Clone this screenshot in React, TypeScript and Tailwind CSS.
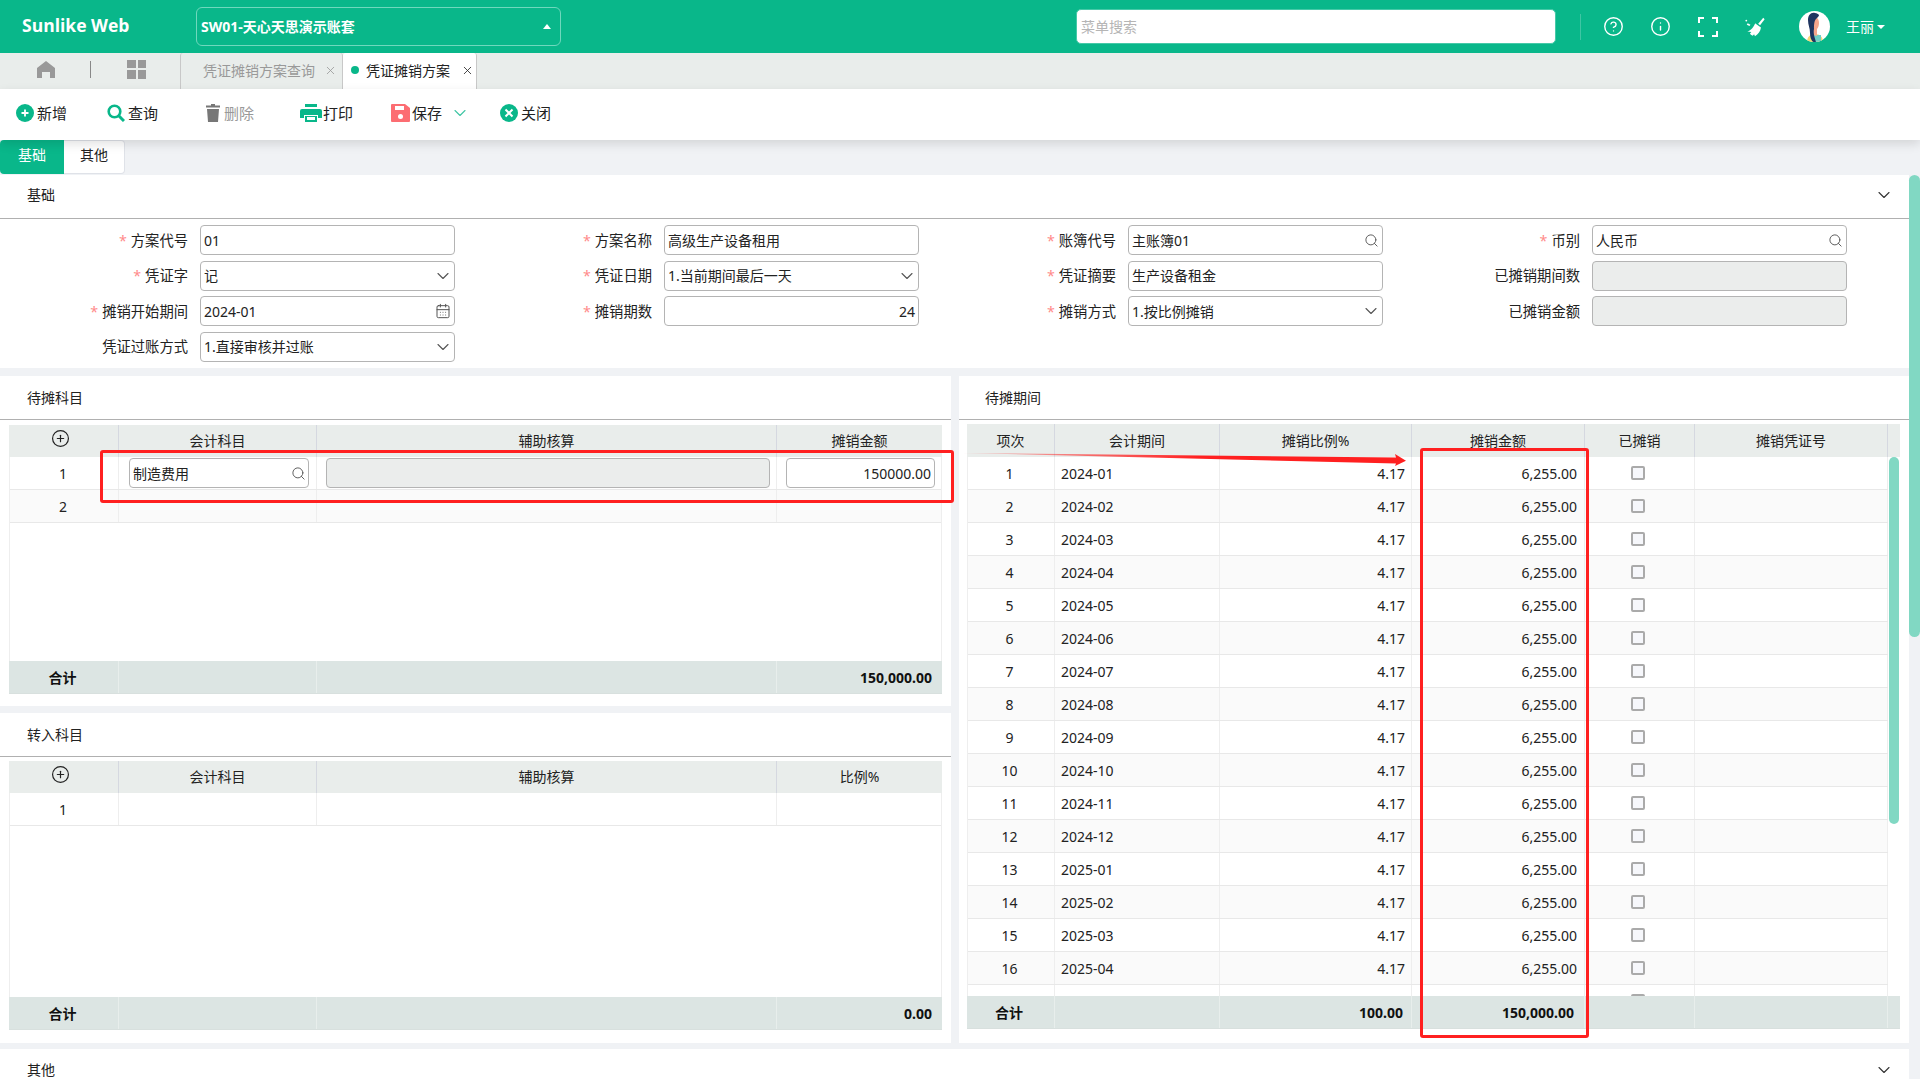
import React from 'react';
import { ChevronDown, Search, CalendarDays, CirclePlus, CircleHelp, Info, X } from 'lucide-react';

const font = 'font-["Noto_Sans","Noto_Sans_CJK_SC",sans-serif]';
const leftCols = 'grid grid-cols-[110px_198px_460px_165px]';
const leftRowCols = 'grid grid-cols-[109px_198px_460px_164px]';
const rightCols = 'grid grid-cols-[88px_165px_192px_173px_110px_193px_12px]';

const periods = [
  '2024-01', '2024-02', '2024-03', '2024-04', '2024-05', '2024-06', '2024-07', '2024-08', '2024-09',
  '2024-10', '2024-11', '2024-12', '2025-01', '2025-02', '2025-03', '2025-04', '',
];

function ToolItem({ icon, label, gap, className, muted }: { icon: React.ReactNode; label: string; gap: string; className?: string; muted?: boolean }) {
  return (
    <div className={`flex items-center ${gap} ${className ?? ''} ${muted ? 'text-[#999]' : 'text-[#222]'}`}>
      {icon}
      <span className="text-[15px] leading-none">{label}</span>
    </div>
  );
}

function Field({ label, required, value, right, disabled, align }: { label?: string; required?: boolean; value?: string; right?: React.ReactNode; disabled?: boolean; align?: string }) {
  return (
    <div className="flex items-center">
      <div className="w-[188px] mr-[12px] pt-[2px] text-right text-[14.300px] leading-none text-[#222] whitespace-nowrap">
        {required && <span className="text-[#ff8a8a] mr-[4px]">*</span>}
        {label}
      </div>
      {label !== undefined && (
        <div className={`w-[255px] h-[30px] rounded-[4px] border border-[#b4b4b4] flex items-center pl-[3px] pr-[3px] text-[14px] text-[#222] ${disabled ? 'bg-[#ebedec]' : 'bg-white'}`}>
          <span className={`flex-1 whitespace-nowrap ${align ?? ''}`}>{value}</span>
          {right}
        </div>
      )}
    </div>
  );
}

const chevron = <ChevronDown className="w-[20px] h-[20px] -mr-[2px] text-[#555]" strokeWidth={1.3} />;
const search = <Search className="w-[15px] h-[15px] text-[#555]" strokeWidth={1.5} />;

function SectionTitle({ title, collapse, className }: { title: string; collapse?: boolean; className?: string }) {
  return (
    <div className={`h-[44px] shrink-0 flex items-center justify-between pr-[15px] border-b border-[#b0b0b0] bg-white text-[14px] text-[#222] ${collapse ? 'pb-[4px]' : ''} ${className ?? 'pl-[27px]'}`}>
      <span>{title}</span>
      {collapse && <ChevronDown className="w-[20px] h-[20px] text-[#333]" strokeWidth={1.3} />}
    </div>
  );
}

function Head({ children, className }: { children?: React.ReactNode; className?: string }) {
  return (
    <div className={`flex items-center justify-center border-r border-[#d5d8e0] text-[14px] text-[#222] last:border-r-0 ${className ?? ''}`}>
      {children}
    </div>
  );
}

function FootCell({ children, className }: { children?: React.ReactNode; className?: string }) {
  return (
    <div className={`flex items-center border-r border-[#e8eeec] text-[14px] font-bold text-[#111] last:border-r-0 ${className ?? ''}`}>
      {children}
    </div>
  );
}

function LeftFooter({ value }: { value: string }) {
  return (
    <div className={`${leftCols} h-[33px] shrink-0 bg-[#dce5e3] border-b border-[#d8e0de]`}>
      <FootCell className="justify-center pr-[2px]">合计</FootCell>
      <FootCell />
      <FootCell />
      <FootCell className="justify-end pr-[10px]">{value}</FootCell>
    </div>
  );
}

function LeftHead({ last }: { last: string }) {
  return (
    <div className={`${leftCols} h-[32px] shrink-0 bg-[#e9edeb]`}>
      <Head className="!items-start pt-[4px] pr-[6px]">
        <CirclePlus className="w-[19px] h-[19px] text-[#222]" strokeWidth={1.5} />
      </Head>
      <Head className="pb-[2px]">会计科目</Head>
      <Head className="pb-[2px]">辅助核算</Head>
      <Head className="pb-[2px]">{last}</Head>
    </div>
  );
}

function Avatar() {
  return (
    <svg viewBox="0 0 31 31" className="w-[31px] h-[31px] rounded-full bg-white">
      <path d="M8 31c0-5 3-8 8-8s8 3 8 8z" fill="#f7d774" />
      <path d="M15 24h7v7h-7z" fill="#6fcfc6" />
      <path d="M15 6c3 0 5 2 5 6 0 3-1 5-2 6v7l-4-1z" fill="#f6a68c" />
      <path d="M16 2c-4-1-7 2-7 7 0 5 2 8 2 13 0 4 1 7 3 9h3c-1-4-3-8-2-13 0-4 0-9 3-11 1-1 2-2 2-3-1-1-2-2-4-2z" fill="#1f3560" />
    </svg>
  );
}

export default function App() {
  return (
    <div className={`relative w-[1920px] h-[1079px] overflow-hidden flex flex-col bg-[#f0f2f5] ${font}`}>
      {/* top bar */}
      <div className="h-[53px] shrink-0 bg-[#09b78a] flex items-center text-white">
        <div className="w-[196px] pl-[22px] pb-[2px] text-[17.500px] font-bold font-['Open_Sans'] leading-none">Sunlike Web</div>
        <div className="w-[365px] h-[39px] rounded-[6px] border border-[#6fd8bd] flex items-center justify-between pl-[4px] pr-[9px]">
          <span className="text-[14px] font-bold">SW01-天心天思演示账套</span>
          <span className="w-0 h-0 border-x-[4px] border-x-transparent border-b-[5px] border-b-white" />
        </div>
        <div className="ml-[515px] w-[480px] h-[35px] rounded-[5px] bg-white border border-[#46c9a8] flex items-center pl-[4px] text-[14px] text-[#b5b5b5]">
          菜单搜索
        </div>
        <div className="ml-[24px] w-px h-[26px] bg-[#3fc6a4]" />
        <CircleHelp className="ml-[22px] w-[21px] h-[21px]" strokeWidth={1.6} />
        <Info className="ml-[26px] w-[21px] h-[21px]" strokeWidth={1.6} />
        <svg viewBox="0 0 20 20" className="ml-[27px] w-[20px] h-[20px]" fill="none" stroke="white" strokeWidth="2">
          <path d="M1 6V1h5M14 1h5v5M19 14v5h-5M6 19H1v-5" />
        </svg>
        <svg viewBox="0 0 24 24" className="ml-[26px] w-[22px] h-[22px]" fill="white">
          <path d="M21 2l1.500 1.500-5 6.500-2-1.500z" />
          <path d="M12 8l6.500 4.500c-.5 4-3 7.500-6.500 9.500l-1-2-1.500 1.500-2-1-1-1.500 1.500-1.500-4.500-.5c3-1 6-3 8.500-8.500z" />
          <circle cx="2.500" cy="5" r="1" />
          <path d="M4 8l3 1.500-1 1.500-3-1.500z" />
        </svg>
        <div className="ml-[33px]"><Avatar /></div>
        <span className="ml-[16px] text-[14px] leading-none">王丽</span>
        <span className="ml-[3px] w-0 h-0 border-x-[4px] border-x-transparent border-t-[4px] border-t-white" />
      </div>

      {/* tabs */}
      <div className="h-[36px] shrink-0 bg-[#e9edeb] flex items-stretch">
        <div className="w-[180px] relative flex items-center pb-[4px]">
          <svg viewBox="0 0 18 17" className="ml-[37px] w-[18px] h-[17px]" fill="#999">
            <path d="M9 0l9 7v10h-5v-6H5v6H0V7z" />
          </svg>
          <div className="ml-[35px] w-px h-[17px] bg-[#888]" />
          <div className="ml-[36px] w-[19px] h-[19px] grid grid-cols-2 grid-rows-2 gap-[2px]">
            <span className="bg-[#999]" /><span className="bg-[#999]" /><span className="bg-[#999]" /><span className="bg-[#999]" />
          </div>
        </div>
        <div className="w-[163px] border-x border-[#c8c8c8] rounded-t-[3px] flex items-center pl-[22px] pb-[2px] text-[14px] text-[#999]">
          凭证摊销方案查询
          <X className="ml-[9px] w-[13px] h-[13px] text-[#999]" strokeWidth={1.5} />
        </div>
        <div className="w-[134px] bg-white border-r border-[#c8c8c8] rounded-t-[3px] flex items-center pl-[8px] pb-[2px] text-[14px] text-[#222]">
          <span className="w-[8px] h-[8px] rounded-full bg-[#09b78a] mr-[7px]" />
          凭证摊销方案
          <X className="ml-[11px] w-[13px] h-[13px] text-[#222]" strokeWidth={1.5} />
        </div>
      </div>

      {/* toolbar */}
      <div className="relative z-10 h-[51px] shrink-0 bg-white flex items-center pl-[16px] pb-[3px] shadow-[0_4px_10px_rgba(0,0,0,0.12)]">
        <ToolItem
          gap="gap-[3px]"
          label="新增"
          icon={
            <svg viewBox="0 0 18 18" className="w-[18px] h-[18px]">
              <circle cx="9" cy="9" r="9" fill="#09b78a" />
              <path d="M9 5.500v7M5.500 9h7" stroke="white" strokeWidth="1.800" />
            </svg>
          }
        />
        <ToolItem
          className="ml-[40px]"
          gap="gap-[3px]"
          label="查询"
          icon={
            <svg viewBox="0 0 18 18" className="w-[18px] h-[18px]" fill="none" stroke="#09b78a">
              <circle cx="7.500" cy="7.500" r="5.800" strokeWidth="2.600" />
              <path d="M11.500 11.500L17 17" strokeWidth="3" />
            </svg>
          }
        />
        <ToolItem
          className="ml-[48px]"
          gap="gap-[4px]"
          label="删除"
          muted
          icon={
            <svg viewBox="0 0 14 18" className="w-[14px] h-[18px]" fill="#777">
              <path d="M5 0h4v1.500h5V3.500H0V1.500h5zM1 5h12l-1 13H2z" />
            </svg>
          }
        />
        <ToolItem
          className="ml-[46px]"
          gap="gap-[1px]"
          label="打印"
          icon={
            <svg viewBox="0 0 22 18" className="w-[22px] h-[18px]">
              <path d="M5 0h12v3H5zM2 5h18a2 2 0 012 2v7h-4v-3H4v3H0V7a2 2 0 012-2z" fill="#09b78a" />
              <path d="M5 12h12v6H5z" fill="#09b78a" />
              <path d="M7 13h8v3H7z" fill="white" />
            </svg>
          }
        />
        <ToolItem
          className="ml-[38px]"
          gap="gap-[2px]"
          label="保存"
          icon={
            <svg viewBox="0 0 19 18" className="w-[19px] h-[18px]">
              <path d="M1 0h13l5 4v13a1 1 0 01-1 1H1a1 1 0 01-1-1V1a1 1 0 011-1z" fill="#fc6d72" />
              <path d="M4 2h9v4H4z" fill="white" />
              <circle cx="9.500" cy="12.500" r="2.500" fill="white" />
            </svg>
          }
        />
        <ChevronDown className="ml-[8px] w-[20px] h-[20px] text-[#3fc6a4]" strokeWidth={1.3} />
        <ToolItem
          className="ml-[30px]"
          gap="gap-[3px]"
          label="关闭"
          icon={
            <svg viewBox="0 0 18 18" className="w-[18px] h-[18px]">
              <circle cx="9" cy="9" r="9" fill="#09b78a" />
              <path d="M5.500 5.500l7 7M12.500 5.500l-7 7" stroke="white" strokeWidth="2" />
            </svg>
          }
        />
      </div>

      {/* body */}
      <div className="flex-1 flex min-h-0">
        <div className="w-[1909px] flex flex-col">
          <div className="h-[35px] shrink-0 flex items-start text-[14px]">
            <div className="w-[64px] h-[34px] pb-[5px] bg-[#09b78a] rounded-l-[4px] flex items-center justify-center text-white">基础</div>
            <div className="w-[61px] h-[34px] pb-[5px] bg-white rounded-r-[4px] border border-l-0 border-[#dfe2e8] flex items-center justify-center text-[#222]">其他</div>
          </div>

          <SectionTitle title="基础" collapse />
          <div className="h-[149px] shrink-0 bg-white pt-[6px] grid grid-cols-[repeat(4,464px)] grid-rows-[repeat(4,30px)] gap-y-[5.5px]">
            <Field required label="方案代号" value="01" />
            <Field required label="方案名称" value="高级生产设备租用" />
            <Field required label="账簿代号" value="主账簿01" right={search} />
            <Field required label="币别" value="人民币" right={search} />
            <Field required label="凭证字" value="记" right={chevron} />
            <Field required label="凭证日期" value="1.当前期间最后一天" right={chevron} />
            <Field required label="凭证摘要" value="生产设备租金" />
            <Field label="已摊销期间数" disabled />
            <Field required label="摊销开始期间" value="2024-01" right={<CalendarDays className="w-[16px] h-[16px] text-[#555]" strokeWidth={1.5} />} />
            <Field required label="摊销期数" value="24" align="text-right" />
            <Field required label="摊销方式" value="1.按比例摊销" right={chevron} />
            <Field label="已摊销金额" disabled />
            <Field label="凭证过账方式" value="1.直接审核并过账" right={chevron} />
          </div>

          <div className="mt-[8px] flex gap-[8px] h-[667px] shrink-0">
            <div className="w-[951px] flex flex-col gap-[7px]">
              <div className="h-[330px] bg-white flex flex-col">
                <SectionTitle title="待摊科目" />
                <div className="flex-1 min-h-0 flex flex-col px-[9px] pt-[5px] pb-[12px]">
                  <LeftHead last="摊销金额" />
                  <div className="flex-1 border-x border-[#eeeeee]">
                    <div className={`${leftRowCols} h-[33px] border-b border-[#e8e8e8]`}>
                      <div className="flex items-center justify-center pr-[2px] text-[14px] text-[#222] border-r border-[#eeeeee]">1</div>
                      <div className="flex items-center pl-[10px] pr-[7px] border-r border-[#eeeeee]">
                        <div className="w-full h-[30px] rounded-[4px] border border-[#b4b4b4] flex items-center pl-[3px] pr-[2px] text-[14px] text-[#222]">
                          <span className="flex-1">制造费用</span>
                          {search}
                        </div>
                      </div>
                      <div className="flex items-center pl-[9px] pr-[6px] border-r border-[#eeeeee]">
                        <div className="w-full h-[30px] rounded-[4px] border border-[#b4b4b4] bg-[#ebedec]" />
                      </div>
                      <div className="flex items-center pl-[9px] pr-[6px]">
                        <div className="w-full h-[30px] rounded-[4px] border border-[#b4b4b4] flex items-center justify-end pr-[3px] text-[14px] text-[#222]">150000.00</div>
                      </div>
                    </div>
                    <div className={`${leftRowCols} h-[33px] border-b border-[#e8e8e8] bg-[#fafafa]`}>
                      <div className="flex items-center justify-center pr-[2px] text-[14px] text-[#222] border-r border-[#eeeeee]">2</div>
                      <div className="border-r border-[#eeeeee]" />
                      <div className="border-r border-[#eeeeee]" />
                      <div />
                    </div>
                  </div>
                  <LeftFooter value="150,000.00" />
                </div>
              </div>

              <div className="h-[330px] bg-white flex flex-col">
                <SectionTitle title="转入科目" />
                <div className="flex-1 min-h-0 flex flex-col px-[9px] pt-[4px] pb-[13px]">
                  <LeftHead last="比例%" />
                  <div className="flex-1 border-x border-[#eeeeee]">
                    <div className={`${leftRowCols} h-[33px] border-b border-[#e8e8e8]`}>
                      <div className="flex items-center justify-center pr-[2px] text-[14px] text-[#222] border-r border-[#eeeeee]">1</div>
                      <div className="border-r border-[#eeeeee]" />
                      <div className="border-r border-[#eeeeee]" />
                      <div />
                    </div>
                  </div>
                  <LeftFooter value="0.00" />
                </div>
              </div>
            </div>

            <div className="w-[950px] bg-white flex flex-col">
              <SectionTitle title="待摊期间" className="pl-[26px]" />
              <div className="flex-1 min-h-0 flex flex-col pl-[8px] pr-[9px] pt-[4px] pb-[14px]">
                <div className={`${rightCols} h-[33px] shrink-0 bg-[#e9edeb]`}>
                  <Head>项次</Head>
                  <Head>会计期间</Head>
                  <Head>摊销比例%</Head>
                  <Head>摊销金额</Head>
                  <Head>已摊销</Head>
                  <Head>摊销凭证号</Head>
                  <Head />
                </div>
                <div className="flex-1 min-h-0 flex">
                  <div className="w-[921px] overflow-hidden border-l border-[#eeeeee]">
                    {periods.map((p, i) => (
                      <div key={i} className={`grid grid-cols-[87px_165px_192px_173px_110px_193px] h-[33px] border-b border-[#e8e8e8] text-[14px] text-[#222] ${i % 2 ? 'bg-[#fafafa]' : 'bg-white'}`}>
                        <div className="flex items-center justify-center pr-[3px] border-r border-[#eeeeee]">{p && i + 1}</div>
                        <div className="flex items-center pl-[6px] border-r border-[#eeeeee]">{p}</div>
                        <div className="flex items-center justify-end pr-[6px] border-r border-[#eeeeee]">{p && '4.17'}</div>
                        <div className="flex items-center justify-end pr-[7px] border-r border-[#eeeeee]">{p && '6,255.00'}</div>
                        <div className="flex items-center justify-center pr-[3px] border-r border-[#eeeeee]">
                          <span className="w-[14px] h-[14px] rounded-[2px] border-2 border-[#aaaaaa] bg-[#f6f7fb]" />
                        </div>
                        <div className="border-r border-[#eeeeee]" />
                      </div>
                    ))}
                  </div>
                  <div className="w-[12px] pl-[1px] pr-[1px]">
                    <div className="h-[367px] rounded-full bg-[#81d8c3]" />
                  </div>
                </div>
                <div className={`${rightCols} h-[33px] shrink-0 bg-[#dce5e3] border-b border-[#d8e0de]`}>
                  <FootCell className="justify-center pr-[3px]">合计</FootCell>
                  <FootCell />
                  <FootCell className="justify-end pr-[8px]">100.00</FootCell>
                  <FootCell className="justify-end pr-[10px]">150,000.00</FootCell>
                  <FootCell />
                  <FootCell />
                  <FootCell />
                </div>
              </div>
            </div>
          </div>

          <div className="mt-[6px] flex-1 bg-white flex items-center justify-between pl-[27px] pr-[15px] pt-[10px] text-[14px] text-[#222]">
            <span>其他</span>
            <ChevronDown className="w-[20px] h-[20px] text-[#333]" strokeWidth={1.3} />
          </div>
        </div>

        <div className="w-[11px] pt-[35px]">
          <div className="h-[462px] rounded-full bg-[#81d8c3]" />
        </div>
      </div>

      {/* red markup drawn on top of the screenshot */}
      <div className="absolute left-[100px] top-[450px] w-[854px] h-[53px] border-[3px] border-[#ff2020] rounded-[3px]" />
      <div className="absolute left-[1420px] top-[448px] w-[169px] h-[590px] border-[3px] border-[#ff2020] rounded-[3px]" />
      <svg className="absolute left-0 top-0 pointer-events-none" width="1920" height="1079">
        <defs>
          <linearGradient id="arrowFade" x1="962" y1="0" x2="1200" y2="0" gradientUnits="userSpaceOnUse">
            <stop offset="0" stopColor="#ff2020" stopOpacity="0.2" />
            <stop offset="1" stopColor="#ff2020" />
          </linearGradient>
        </defs>
        <path d="M962 453L1396 457.500L1395 454L1406 460.700L1395 466L1396 463.500z" fill="url(#arrowFade)" />
      </svg>
    </div>
  );
}
